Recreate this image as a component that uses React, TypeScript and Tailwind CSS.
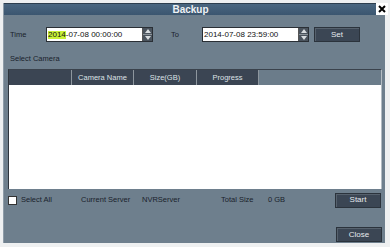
import React from "react";

const font = { fontFamily: '"Liberation Sans", Arial, sans-serif' };

function Spinner() {
  return (
    <div className="flex h-full w-[10px] flex-col border-l border-[#555] bg-[#4a535d]">
      <div className="flex flex-1 items-center justify-center border-b border-[#8a9298]">
        <svg width="6" height="4" viewBox="0 0 6 4"><path d="M0 4 L3 0 L6 4 Z" fill="#d8dde0" /></svg>
      </div>
      <div className="flex flex-1 items-center justify-center">
        <svg width="6" height="4" viewBox="0 0 6 4"><path d="M0 0 L3 4 L6 0 Z" fill="#d8dde0" /></svg>
      </div>
    </div>
  );
}

function DateInput({ children }: { children: React.ReactNode }) {
  return (
    <div className="flex h-[15px] w-[107px] items-stretch border border-[#2a2f35] bg-white">
      <div className="flex flex-1 items-center pl-[1px] text-[8px] leading-none text-[#111]">{children}</div>
      <Spinner />
    </div>
  );
}

function Btn({ label }: { label: string }) {
  return (
    <div className="flex h-[15px] w-[46px] items-center justify-center border border-[#2b333c] bg-[#3b4654] text-[8px] text-[#e6eaee] shadow-[inset_1px_1px_0_#56616d]">
      {label}
    </div>
  );
}

export default function App() {
  return (
    <div className="h-[247px] w-[390px] overflow-hidden bg-[#eef0f1] pl-[3px] pt-[3px]" style={font}>
      <div className="relative flex h-[240px] w-[382px] flex-col bg-[#6e7f8d] border-l border-[#8e9ca8]">
        {/* title bar */}
        <div className="flex h-[12px] w-[373px] items-center justify-center border-t border-[#2d3e4e] bg-gradient-to-b from-[#4a6680] to-[#3b5670] text-[10px] font-bold leading-none text-[#eef2f5]">
          Backup
        </div>
        <div className="absolute right-[-3px] top-0 flex h-[12px] w-[12px] items-center justify-center bg-white">
          <svg width="8" height="8" viewBox="0 0 8 8">
            <path d="M1 1 L7 7 M7 1 L1 7" stroke="#000" strokeWidth="2" />
          </svg>
        </div>

        {/* time row */}
        <div className="mt-[12px] flex h-[15px] items-center text-[7.5px] text-[#1a222c]">
          <span className="ml-[6px] w-[36px]">Time</span>
          <DateInput>
            <span className="bg-[#c9f238]">2014</span>-07-08 00:00:00
          </DateInput>
          <span className="ml-[18px] w-[31px]">To</span>
          <DateInput>2014-07-08 23:59:00</DateInput>
          <div className="ml-[5px]">
            <Btn label="Set" />
          </div>
        </div>

        {/* select camera */}
        <div className="ml-[6px] mt-[12px] text-[7.5px] leading-[10px] text-[#1a222c]">Select Camera</div>

        {/* table */}
        <div className="ml-[4px] mt-[5px] flex h-[120px] w-[374px] flex-col border-l border-[#2d343c] border-r border-r-[#b3bcc3] border-t border-t-[#3a424c]">
          <div className="flex h-[15px] text-[7.5px] text-[#dde2e6]">
            <div className="w-[63px] bg-[#3b4553] border-r border-[#8d969e]" />
            <div className="flex w-[62px] items-center justify-center bg-[#3b4553] border-r border-[#8d969e]">Camera Name</div>
            <div className="flex w-[63px] items-center justify-center bg-[#3b4553] border-r border-[#8d969e]">Size(GB)</div>
            <div className="flex w-[62px] items-center justify-center bg-[#3b4553] border-r border-[#8d969e]">Progress</div>
            <div className="flex-1 bg-[#6b7c8a]" />
          </div>
          <div className="flex-1 bg-white" />
        </div>

        {/* footer row */}
        <div className="mt-[4px] flex h-[14px] items-center text-[7.5px] text-[#1a222c]">
          <div className="ml-[4px] h-[9px] w-[9px] border border-[#333] bg-white" />
          <span className="ml-[4px] w-[60px]">Select All</span>
          <span className="w-[61px]">Current Server</span>
          <span className="w-[79px]">NVRServer</span>
          <span className="w-[47px]">Total Size</span>
          <span className="w-[67px]">0 GB</span>
          <Btn label="Start" />
        </div>

        <div className="mt-[20px] flex justify-end pr-[3px]">
          <Btn label="Close" />
        </div>
      </div>
    </div>
  );
}
